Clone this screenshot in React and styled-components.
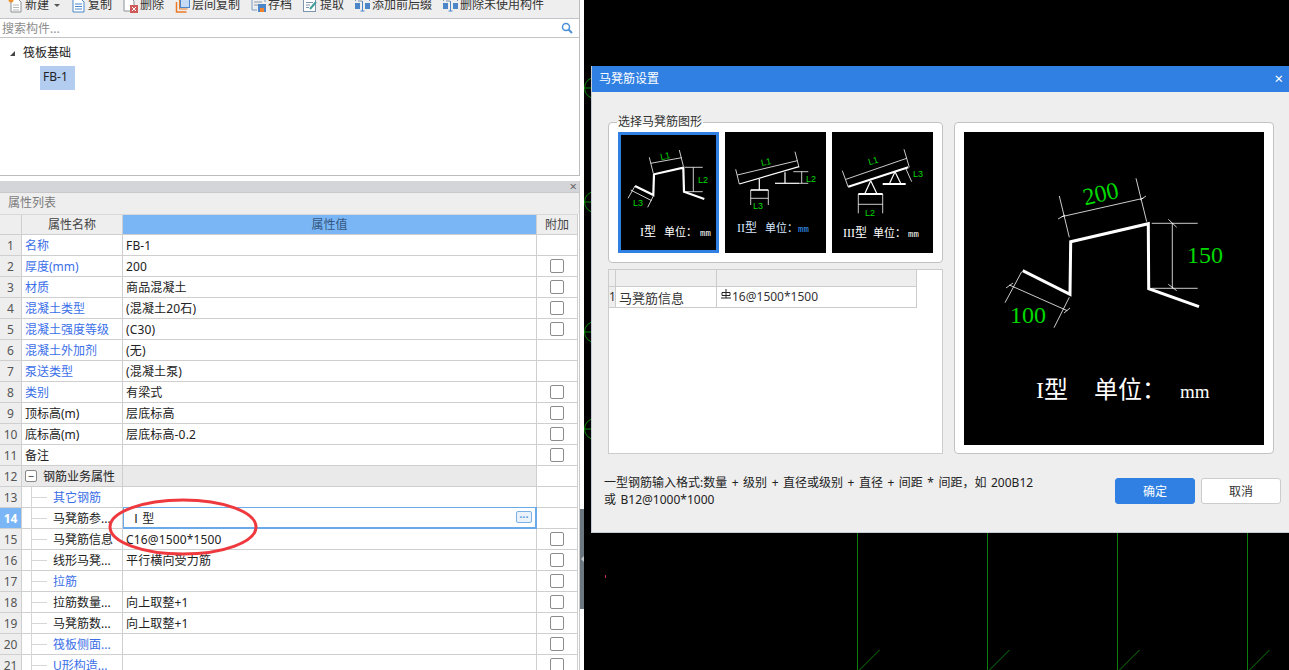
import React from 'react'
import styled, { createGlobalStyle } from 'styled-components'

const GlobalStyle = createGlobalStyle`
  html, body { margin: 0; padding: 0; background: #000; }
  body {
    font-family: "Noto Sans", "Noto Sans CJK SC", sans-serif;
    font-size: 12px;
    color: #222;
  }
  * { box-sizing: border-box; }
`

const tools = [
  { icon: 'new', label: '新建', caret: true },
  { icon: 'copy', label: '复制' },
  { icon: 'del', label: '删除' },
  { icon: 'layer', label: '层间复制' },
  { icon: 'save', label: '存档' },
  { icon: 'pick', label: '提取' },
  { icon: 'fix', label: '添加前后缀' },
  { icon: 'fix', label: '删除未使用构件' },
]

const rows = [
  { name: '名称', value: 'FB-1', link: true },
  { name: '厚度(mm)', value: '200', link: true, check: true },
  { name: '材质', value: '商品混凝土', link: true, check: true },
  { name: '混凝土类型', value: '(混凝土20石)', link: true, check: true },
  { name: '混凝土强度等级', value: '(C30)', link: true, check: true },
  { name: '混凝土外加剂', value: '(无)', link: true },
  { name: '泵送类型', value: '(混凝土泵)', link: true },
  { name: '类别', value: '有梁式', link: true, check: true },
  { name: '顶标高(m)', value: '层底标高', check: true },
  { name: '底标高(m)', value: '层底标高-0.2', check: true },
  { name: '备注', value: '', check: true },
  { name: '钢筋业务属性', group: true },
  { name: '其它钢筋', value: '', link: true, child: true },
  { name: '马凳筋参...', value: 'Ⅰ型', child: true, active: true },
  { name: '马凳筋信息', value: 'C16@1500*1500', child: true, check: true },
  { name: '线形马凳...', value: '平行横向受力筋', child: true, check: true },
  { name: '拉筋', value: '', link: true, child: true, check: true },
  { name: '拉筋数量...', value: '向上取整+1', child: true, check: true },
  { name: '马凳筋数...', value: '向上取整+1', child: true, check: true },
  { name: '筏板侧面...', value: '', link: true, child: true, check: true },
  { name: 'U形构造...', value: '', link: true, child: true, check: true },
]

const ToolIcon = ({ type }) => {
  if (type === 'new') return (
    <IconSvg viewBox="0 0 15 16">
      <path d="M3 2h7l3 3v10H3z" fill="#fff" stroke="#8a8f96" />
      <path d="M5 8h6M5 10.500h6M5 13h6" stroke="#b5b9be" />
      <circle cx="3" cy="3" r="2.500" fill="#f0912e" />
    </IconSvg>
  )
  if (type === 'copy') return (
    <IconSvg viewBox="0 0 15 16">
      <path d="M2 1h7l4 4v10H2z" fill="#fff" stroke="#4a86c8" />
      <path d="M4 7h7M4 9.500h7M4 12h7" stroke="#4a86c8" />
    </IconSvg>
  )
  if (type === 'del') return (
    <IconSvg viewBox="0 0 15 16">
      <path d="M1 1h7l3 3v10H1z" fill="#fff" stroke="#8a9298" />
      <rect x="7" y="8" width="8" height="8" fill="#cf5a5a" />
      <path d="M9 10l4 4M13 10l-4 4" stroke="#fff" />
    </IconSvg>
  )
  if (type === 'layer') return (
    <IconSvg viewBox="0 0 15 16">
      <path d="M1.500 5v10h10" fill="none" stroke="#ec7a26" strokeWidth="1.500" />
      <path d="M4.500 3v9h8" fill="none" stroke="#ec7a26" />
      <rect x="5.500" y="0.500" width="9" height="10" fill="#c4daf5" stroke="#4a86c8" />
    </IconSvg>
  )
  if (type === 'save') return (
    <IconSvg viewBox="0 0 15 16">
      <path d="M1 1h13v4M1 1v12h5" fill="none" stroke="#7d9cc0" />
      <path d="M3 5h8M3 8h4" stroke="#8a9aac" />
      <rect x="7" y="7" width="8" height="8" fill="#4a86c8" />
      <rect x="9" y="11" width="4" height="4" fill="#f0812e" />
    </IconSvg>
  )
  if (type === 'pick') return (
    <IconSvg viewBox="0 0 15 16">
      <rect x="0.500" y="2.500" width="12" height="12" fill="#fff" stroke="#7d93ac" />
      <path d="M3 5.500h7M3 8h4M3 10.500h3" stroke="#7d93ac" />
      <path d="M7 12l6-7" stroke="#3f9e9a" strokeWidth="2" />
    </IconSvg>
  )
  return (
    <IconSvg viewBox="0 0 15 16">
      <path d="M0.500 4V1.500h14V4" fill="none" stroke="#7d93ac" />
      <path d="M3 4h4" stroke="#7d93ac" />
      <rect x="0" y="6" width="5" height="6" fill="#4a86c8" />
      <rect x="10" y="6" width="5" height="6" fill="#4a86c8" />
      <path d="M7.500 4v10M5.500 14h4" stroke="#4a86c8" />
    </IconSvg>
  )
}

// lines of a drawing: [x1, y1, x2, y2, width]
const Lines = ({ list, color = '#fff' }) => (
  <>
    {list.map((l, i) => (
      <line key={i} x1={l[0]} y1={l[1]} x2={l[2]} y2={l[3]} stroke={color} strokeWidth={l[4] || 0.8} />
    ))}
  </>
)

const DimText = styled.text`
  font-family: "Liberation Sans", sans-serif;
  font-size: 9px;
  fill: #00d800;
`

const CaptionText = styled.text`
  font-family: "Liberation Serif", "Noto Sans CJK SC", serif;
  font-size: ${p => p.$size || 12}px;
  fill: ${p => p.$fill || '#fff'};
`

const UnitSpan = styled.tspan`
  font-family: "Liberation Mono", monospace;
  font-size: 9px;
  fill: ${p => p.$fill || '#fff'};
`

const thumbOne = [
  [31.3, 25.3, 35.3, 41.3], [61.3, 18, 65.3, 34], [32.7, 31.3, 63.7, 25.7],
  [67, 35.3, 84.7, 35.3], [67, 59.7, 84.7, 59.7], [75.3, 35.3, 75.3, 59.7],
  [17, 54, 10, 66.3], [35.3, 64, 29.700, 75.3], [12.7, 58, 33.7, 68.7],
]
const thumbTwo = [
  [12.3, 43, 72.3, 28.7], [10.7, 37.3, 14.3, 52], [70, 19.7, 74, 35.3], [14.3, 52, 74, 34.7, 1.2],
  [34.3, 47, 34.3, 58, 1.2], [25.7, 58, 43.3, 58, 1.6], [25.7, 66.3, 43.3, 66.3],
  [25.7, 58, 25.7, 73], [43.3, 58, 43.3, 73], [60, 40.3, 60, 51.3, 1.2], [50, 51.3, 74, 51.3, 1.2],
  [68.3, 39.7, 83.3, 39.7], [74, 51.3, 83.3, 51.3], [76.7, 39.7, 76.7, 51.3],
]
const thumbThree = [
  [14, 47.3, 74.7, 26.3], [10.3, 38.7, 16.3, 55.3], [72, 17.3, 77.3, 35.3], [16.3, 54.7, 76.3, 35.3, 2],
  [38.7, 48.7, 33, 61.3, 1.2], [38.7, 48.7, 44.7, 61.3, 1.2], [26.3, 62, 50.7, 62, 2],
  [26.3, 62, 26.3, 81.3], [50.7, 62, 50.7, 81.3], [26.3, 72.3, 50.7, 72.3],
  [63, 39.7, 57.3, 52, 1.2], [63, 39.7, 69, 52, 1.2], [50.7, 52, 73.7, 52, 2], [73.7, 36.3, 79.7, 49.7],
]

const ThumbOne = () => (
  <svg width="100%" height="100%" viewBox="0 0 95 115" preserveAspectRatio="none">
    <g transform="translate(-3 -3)">
      <polyline points="17,54 35.3,63 36,42.3 65.3,35.700 66,59.700 86.3,67" fill="none" stroke="#fff" strokeWidth="2.200" />
      <Lines list={thumbOne} />
      <DimText x="42" y="27" transform="rotate(-12 48 23)">L1</DimText>
      <DimText x="80" y="51">L2</DimText>
      <DimText x="15" y="74">L3</DimText>
      <CaptionText x="22" y="104">I型<tspan x="46" fontSize="11">单位：</tspan><UnitSpan x="82">mm</UnitSpan></CaptionText>
    </g>
  </svg>
)

const ThumbTwo = () => (
  <svg width="100%" height="100%" viewBox="0 0 101 121">
    <Lines list={thumbTwo} />
    <DimText x="36" y="33" transform="rotate(-12 41 30)">L1</DimText>
    <DimText x="81" y="50">L2</DimText>
    <DimText x="28" y="77">L3</DimText>
    <CaptionText x="12" y="100" $fill="#d6e8ff">II型<tspan x="40" fontSize="11">单位：</tspan><UnitSpan x="73" $fill="#3a9cff">mm</UnitSpan></CaptionText>
  </svg>
)

const ThumbThree = () => (
  <svg width="100%" height="100%" viewBox="0 0 101 121">
    <Lines list={thumbThree} />
    <DimText x="36" y="32" transform="rotate(-16 41 28)">L1</DimText>
    <DimText x="33" y="84">L2</DimText>
    <DimText x="81" y="45">L3</DimText>
    <CaptionText x="11" y="105">III型<tspan x="41" fontSize="11">单位：</tspan><UnitSpan x="76">mm</UnitSpan></CaptionText>
  </svg>
)

const previewLines = [
  [95.3, 64, 105.3, 105.3], [172, 46.3, 182.7, 89.7], [97.7, 84.7, 179.3, 66.3],
  [187.7, 91.3, 233.7, 91.3], [187.7, 156.3, 233.7, 156.3], [208.3, 91.3, 208.3, 156.3],
  [204.3, 87.3, 212.7, 95.3], [204.3, 152.3, 212.7, 158.7],
  [57.7, 139.7, 41, 170.7], [105.3, 165.3, 90, 195.7], [45.3, 153, 103.3, 178.7],
  [94, 87, 101, 83], [176, 68, 182, 64], [42, 156, 49, 151], [100, 181, 106, 176],
]

const PreviewDrawing = () => (
  <svg width="300" height="313" viewBox="0 0 300 313">
    <polyline
      points="58.7,138.7 106,162.3 106.7,109.7 184.3,91.7 184.7,156.7 235,174.7"
      fill="none" stroke="#fff" strokeWidth="3"
    />
    <Lines list={previewLines} />
    <CaptionText x="118" y="70" $size={24} $fill="#00d800" transform="rotate(-13 135 59)">200</CaptionText>
    <CaptionText x="223" y="131" $size={24} $fill="#00d800">150</CaptionText>
    <CaptionText x="46" y="191" $size={24} $fill="#00d800">100</CaptionText>
    <CaptionText x="72" y="266" $size={24}>I型<tspan x="130">单位：</tspan><tspan x="216" fontSize="19">mm</tspan></CaptionText>
  </svg>
)

const verticals = [857.5, 987.5, 1117.5, 1247.5]
const arcs = [88, 202, 332, 429]

const CanvasDrawing = () => (
  <CanvasSvg viewBox="584 0 705 670">
    {arcs.map(y => (
      <g key={y} fill="none" stroke="#0a8a0a" strokeWidth="1">
        <circle cx="595" cy={y} r="10.500" />
        <line x1="584" y1={y} x2="596" y2={y} />
      </g>
    ))}
    {verticals.map(x => (
      <g key={x} stroke="#0c7c0c" strokeWidth="1">
        <line x1={x} y1="530" x2={x} y2="670" />
        <line x1={x} y1="672" x2={x + 22} y2="650" />
      </g>
    ))}
    <line x1="605.500" y1="575" x2="605.500" y2="578" stroke="#c0304a" />
  </CanvasSvg>
)

export default function App() {
  return (
    <Page>
      <GlobalStyle />
      <LeftColumn>
        <TopPanel>
          <Toolbar>
            {tools.map((t, i) => (
              <ToolItem key={i}>
                <ToolIcon type={t.icon} />
                {t.label}
                {t.caret && <Caret />}
              </ToolItem>
            ))}
          </Toolbar>
          <SearchRow>
            搜索构件...
            <svg width="12" height="12" viewBox="0 0 12 12">
              <circle cx="5" cy="5" r="3.500" fill="none" stroke="#4a90d6" strokeWidth="1.500" />
              <path d="M7.500 7.500L11 11" stroke="#4a90d6" strokeWidth="2" />
            </svg>
          </SearchRow>
          <Tree>
            <TreeRoot><TreeArrow />筏板基础</TreeRoot>
            <TreeLeaf>FB-1</TreeLeaf>
          </Tree>
        </TopPanel>
        <PropsPanel>
          <PropsBar>×</PropsBar>
          <PropsTitle>属性列表</PropsTitle>
          <HeadRow>
            <HeadCell />
            <HeadCell>属性名称</HeadCell>
            <HeadCell $accent>属性值</HeadCell>
            <HeadCell>附加</HeadCell>
          </HeadRow>
          {rows.map((r, i) => (
            <Row key={i}>
              <NumCell $active={r.active}>{i + 1}</NumCell>
              <NameCell $link={r.link} $child={r.child} $group={r.group}>
                {r.group && <Expander>−</Expander>}
                {r.child && <TreeDash />}
                {r.name}
              </NameCell>
              <ValueCell $active={r.active} $group={r.group}>
                {r.value}
                {r.active && <MoreButton>···</MoreButton>}
              </ValueCell>
              <ExtraCell>{r.check && <Check />}</ExtraCell>
            </Row>
          ))}
          <Ellipse viewBox="0 0 152 60" width="152" height="60">
            <ellipse cx="75" cy="29" rx="73" ry="27" fill="none" stroke="#ee3a3f" strokeWidth="3" />
          </Ellipse>
        </PropsPanel>
      </LeftColumn>
      <Splitter>
        <SplitHandle />
      </Splitter>
      <Canvas>
        <CanvasDrawing />
        <Dialog>
          <DialogTitle>
            马凳筋设置
            <CloseMark>×</CloseMark>
          </DialogTitle>
          <DialogBody>
            <DialogMain>
              <LeftPane>
                <GroupBox>
                  <GroupLegend>选择马凳筋图形</GroupLegend>
                  <Thumb $selected><ThumbOne /></Thumb>
                  <Thumb><ThumbTwo /></Thumb>
                  <Thumb><ThumbThree /></Thumb>
                </GroupBox>
                <GridBox>
                  <MiniRow $head>
                    <MiniCell $w={7} />
                    <MiniCell $w={101} />
                    <MiniCell $w={200} />
                  </MiniRow>
                  <MiniRow>
                    <MiniCell $w={7} $num>1</MiniCell>
                    <MiniCell $w={101} $large>马凳筋信息</MiniCell>
                    <MiniCell $w={200}>
                      <GradeMark viewBox="0 0 10 10" width="10" height="10">
                        <path d="M1 3.500h8v3H1zM5 0v9M0 9h10" fill="none" stroke="#222" />
                      </GradeMark>
                      16@1500*1500
                    </MiniCell>
                  </MiniRow>
                </GridBox>
              </LeftPane>
              <PreviewBox>
                <PreviewBlack><PreviewDrawing /></PreviewBlack>
              </PreviewBox>
            </DialogMain>
            <DialogFooter>
              <FooterNote>
                一型钢筋输入格式:数量 + 级别 + 直径或级别 + 直径 + 间距 * 间距，如 200B12
                <br />
                或 B12@1000*1000
              </FooterNote>
              <FooterButton $primary>确定</FooterButton>
              <FooterButton>取消</FooterButton>
            </DialogFooter>
          </DialogBody>
        </Dialog>
      </Canvas>
    </Page>
  )
}

const Page = styled.div`
  display: flex;
  width: 1289px;
  height: 670px;
  overflow: hidden;
  background: #000;
`

const LeftColumn = styled.div`
  width: 580px;
  flex: none;
  display: flex;
  flex-direction: column;
  background: #fff;
`

const TopPanel = styled.div`
  height: 176px;
  flex: none;
  border-right: 1px solid #bcbcbc;
  border-bottom: 1px solid #bcbcbc;
  margin-bottom: 5px;
`

const Toolbar = styled.div`
  height: 19px;
  padding: 0 0 5px 8px;
  display: flex;
  align-items: flex-end;
  gap: 11px;
  overflow: hidden;
  background: #eeeeee;
  border-bottom: 1px solid #c3c3cb;
`

const ToolItem = styled.div`
  display: flex;
  align-items: center;
  height: 16px;
  line-height: 16px;
  flex: none;
  color: #333;
  white-space: nowrap;
`

const IconSvg = styled.svg`
  width: 15px;
  height: 16px;
  margin-right: 2px;
  flex: none;
`

const Caret = styled.span`
  width: 0;
  height: 0;
  margin-left: 5px;
  border-left: 3px solid transparent;
  border-right: 3px solid transparent;
  border-top: 3px solid #555;
`

const SearchRow = styled.div`
  height: 19px;
  padding: 0 6px 0 2px;
  display: flex;
  align-items: center;
  justify-content: space-between;
  color: #8d8d8d;
  border-bottom: 1px solid #c4c4c4;
`

const Tree = styled.div`
  padding: 7px 0 0 0;
`

const TreeRoot = styled.div`
  height: 16px;
  line-height: 16px;
  padding-left: 10px;
  display: flex;
  align-items: center;
  color: #222;
`

const TreeArrow = styled.span`
  width: 0;
  height: 0;
  margin-right: 8px;
  border-left: 5px solid transparent;
  border-bottom: 5px solid #444;
`

const TreeLeaf = styled.div`
  width: 35px;
  height: 24px;
  line-height: 22px;
  margin: 5px 0 0 40px;
  padding-left: 3px;
  background: #b3cdf0;
  color: #222;
`

const PropsPanel = styled.div`
  position: relative;
  flex: 1;
  overflow: hidden;
  border-right: 1px solid #c8c8c8;
`

const PropsBar = styled.div`
  height: 11px;
  line-height: 10px;
  padding-right: 2px;
  text-align: right;
  font-size: 13px;
  color: #666;
  background: #d4d5d9;
`

const PropsTitle = styled.div`
  height: 22px;
  line-height: 20px;
  padding-left: 8px;
  color: #7b7b7b;
  background: #eeeeee;
  border-top: 1px solid #c9c9cc;
`

const Row = styled.div`
  display: grid;
  grid-template-columns: 22px 101px 414px 41px;
  grid-template-rows: 21px;
  width: 578px;
  height: 21px;
  line-height: 22px;
`

const HeadRow = styled(Row)`
  background: #eeeeee;
`

const HeadCell = styled.div`
  text-align: center;
  line-height: 20px;
  color: ${p => (p.$accent ? '#35577f' : '#444')};
  background: ${p => (p.$accent ? '#7ab6f5' : '#eeeeee')};
  border-right: 1px solid #cfcfcf;
  border-bottom: 1px solid #cfcfcf;
  border-top: 1px solid #d8d8d8;
`

const NumCell = styled.div`
  text-align: center;
  font-weight: ${p => (p.$active ? 700 : 400)};
  color: ${p => (p.$active ? '#fff' : '#555')};
  background: ${p => (p.$active ? '#7ab6f5' : '#eeeeee')};
  border-right: 1px solid #cfcfcf;
  border-bottom: 1px solid #cfcfcf;
`

const NameCell = styled.div`
  position: relative;
  display: flex;
  align-items: center;
  padding: 2px 0 0 ${p => (p.$child ? 31 : 3)}px;
  color: ${p => (p.$link ? '#3b6fe8' : '#222')};
  background: ${p => (p.$group ? '#eaeaea' : '#fff')};
  border-right: 1px solid #cfcfcf;
  border-bottom: 1px solid #cfcfcf;
  white-space: nowrap;
`

const ValueCell = styled.div`
  position: relative;
  padding-left: ${p => (p.$active ? 6 : 3)}px;
  letter-spacing: 0.15px;
  color: #222;
  background: ${p => (p.$group ? '#eaeaea' : '#fff')};
  border-right: ${p => (p.$active ? '2px solid #6aaae8' : '1px solid #cfcfcf')};
  border-bottom: ${p => (p.$active ? '2px solid #6aaae8' : '1px solid #cfcfcf')};
  border-top: ${p => (p.$active ? '1px solid #6aaae8' : 'none')};
  border-left: ${p => (p.$active ? '1px solid #6aaae8' : 'none')};
  margin-top: ${p => (p.$active ? '-1px' : '0')};
  height: ${p => (p.$active ? '22px' : 'auto')};
`

const ExtraCell = styled.div`
  display: flex;
  align-items: center;
  justify-content: center;
  padding-right: 1px;
  border-right: 1px solid #cfcfcf;
  border-bottom: 1px solid #cfcfcf;
`

const Check = styled.span`
  width: 14px;
  height: 14px;
  border: 1px solid #8c8c8c;
  border-radius: 2px;
  background: #fff;
`

const Expander = styled.span`
  width: 12px;
  height: 12px;
  margin: -2px 6px 0 0;
  flex: none;
  display: flex;
  align-items: center;
  justify-content: center;
  border: 1px solid #888;
  border-radius: 2px;
  background: #fff;
  font-size: 11px;
  line-height: 10px;
  color: #333;
`

const TreeDash = styled.span`
  position: absolute;
  left: 9px;
  top: 0;
  width: 16px;
  height: 21px;
  border-left: 1px solid #d6d6d6;
  background: linear-gradient(#d6d6d6, #d6d6d6) no-repeat 0 10px / 16px 1px;
`

const MoreButton = styled.span`
  position: absolute;
  right: 3px;
  top: 3px;
  width: 16px;
  height: 12px;
  line-height: 9px;
  text-align: center;
  font-size: 11px;
  font-weight: 700;
  color: #5b9fe0;
  border: 1px solid #7ab0e6;
  border-radius: 2px;
  background: #eaf2fb;
`

const Ellipse = styled.svg`
  position: absolute;
  left: 108px;
  top: 317px;
`

const Splitter = styled.div`
  width: 4px;
  flex: none;
  background: #fff;
  padding-top: 509px;
`

const SplitHandle = styled.div`
  position: relative;
  height: 100px;
  background: #6d7780;
  &::after {
    content: "";
    position: absolute;
    left: 1px;
    top: 47px;
    border-top: 3px solid transparent;
    border-bottom: 3px solid transparent;
    border-right: 3px solid #c4c8cc;
  }
`

const Canvas = styled.div`
  position: relative;
  flex: 1;
  background: #000;
`

const CanvasSvg = styled.svg`
  position: absolute;
  inset: 0;
  width: 100%;
  height: 100%;
`

const Dialog = styled.div`
  position: absolute;
  left: 7px;
  top: 66px;
  width: 698px;
  height: 467px;
  display: flex;
  flex-direction: column;
  background: #eeeeee;
  border-left: 1px solid #c5ccd8;
  border-bottom: 1px solid #c5ccd8;
`

const DialogTitle = styled.div`
  height: 26px;
  flex: none;
  display: flex;
  align-items: center;
  justify-content: space-between;
  padding: 0 6px 2px 7px;
  color: #fff;
  background: #2f80e2;
`

const CloseMark = styled.span`
  font-size: 15px;
  line-height: 16px;
`

const DialogBody = styled.div`
  flex: 1;
  padding: 30px 8px 0 12px;
`

const DialogMain = styled.div`
  display: flex;
  gap: 11px;
  margin-left: 4px;
`

const LeftPane = styled.div`
  width: 335px;
  display: flex;
  flex-direction: column;
  gap: 6px;
`

const GroupBox = styled.div`
  position: relative;
  height: 141px;
  padding: 9px 9px 0 9px;
  display: flex;
  gap: 6px;
  background: #fff;
  border: 1px solid #c2c2c2;
  border-radius: 4px;
`

const GroupLegend = styled.span`
  position: absolute;
  left: 8px;
  top: -8px;
  padding: 0 1px;
  line-height: 14px;
  color: #333;
  background: linear-gradient(#eeeeee 50%, #fff 50%);
`

const Thumb = styled.div`
  width: 101px;
  height: 121px;
  flex: none;
  background: #000;
  border: ${p => (p.$selected ? '3px solid #2f80e2' : 'none')};
`

const GridBox = styled.div`
  height: 185px;
  background: #fff;
  border: 1px solid #cccccc;
`

const MiniRow = styled.div`
  display: flex;
  width: 308px;
  height: ${p => (p.$head ? 17 : 21)}px;
  line-height: 20px;
  background: ${p => (p.$head ? '#eeeeee' : '#fff')};
  border-bottom: 1px solid #cccccc;
`

const MiniCell = styled.div`
  width: ${p => p.$w}px;
  flex: none;
  display: flex;
  align-items: center;
  padding-top: ${p => (p.$large ? 2 : 0)}px;
  padding-left: ${p => (p.$num ? 0 : 3)}px;
  font-size: ${p => (p.$large ? 13 : 12)}px;
  background: ${p => (p.$num ? '#eeeeee' : 'transparent')};
  border-right: 1px solid #cccccc;
  color: #333;
`

const GradeMark = styled.svg`
  margin: -6px 1px 0 1px;
`

const PreviewBox = styled.div`
  width: 320px;
  height: 332px;
  padding: 9px;
  background: #fff;
  border: 1px solid #c2c2c2;
  border-radius: 4px;
`

const PreviewBlack = styled.div`
  width: 300px;
  height: 313px;
  background: #000;
`

const DialogFooter = styled.div`
  display: flex;
  align-items: flex-start;
  margin-top: 20px;
`

const FooterNote = styled.div`
  flex: 1;
  line-height: 17px;
  word-spacing: 1.4px;
  color: #222;
`

const FooterButton = styled.button`
  width: 80px;
  height: 26px;
  margin: 4px 0 0 6px;
  padding: 0;
  font: inherit;
  color: ${p => (p.$primary ? '#fff' : '#333')};
  background: ${p => (p.$primary ? '#2f80e2' : '#fff')};
  border: 1px solid ${p => (p.$primary ? '#2f80e2' : '#cccccc')};
  border-radius: 3px;
`
